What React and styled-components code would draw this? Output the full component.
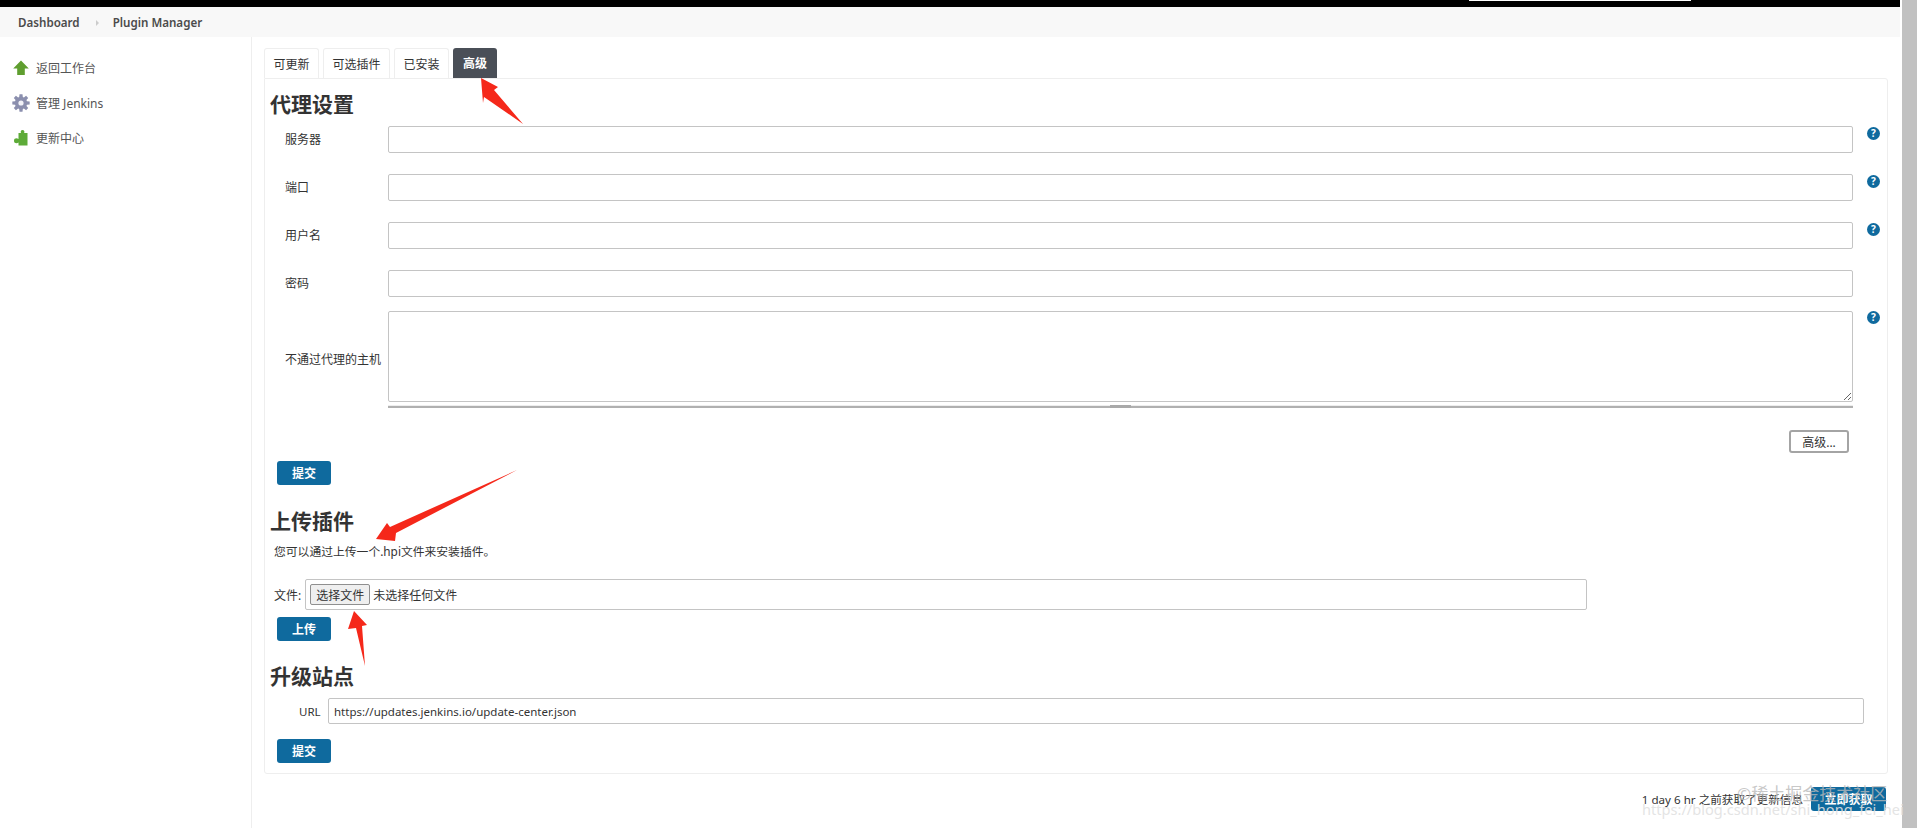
import React from 'react'
import styled, { createGlobalStyle } from 'styled-components'

const GlobalStyle = createGlobalStyle`
  html, body {
    margin: 0;
    height: 100%;
    overflow: hidden;
    background: #fff;
  }
  body {
    font-family: "Noto Sans", "Noto Sans CJK SC", sans-serif;
    font-size: 12px;
    color: #333;
  }
  * { box-sizing: border-box; }
`

const Shell = styled.div`
  position: relative;
  display: flex;
  height: 828px;
  overflow: hidden;
`

const Page = styled.div`
  width: 1900px;
  display: flex;
  flex-direction: column;
`

const Scrollbar = styled.div`
  width: 15px;
  margin-left: 2px;
  background: #c1c1c1;
`

const TopBar = styled.div`
  height: 7px;
  background: #000;
  display: flex;
  justify-content: flex-end;
  padding-right: 209px;
`

const SearchEdge = styled.div`
  width: 222px;
  height: 1px;
  background: #fff;
`

const Breadcrumb = styled.div`
  height: 30px;
  background: #f8f8f8;
  display: flex;
  align-items: center;
  padding-left: 18px;
  font-size: 11.6px;
  font-weight: 600;
  color: #4b4b4b;
`

const Crumb = styled.span`
  &:not(:first-child) {
    margin-left: 16px;
  }
  &:not(:first-child)::before {
    content: '';
    display: inline-block;
    margin-right: 14px;
    border-left: 3px solid #ccc;
    border-top: 3px solid transparent;
    border-bottom: 3px solid transparent;
    vertical-align: 1px;
  }
`

const Main = styled.div`
  flex: 1;
  display: flex;
`

const Side = styled.nav`
  width: 252px;
  border-right: 1px solid #eee;
  padding-top: 21px;
`

const SideItem = styled.div`
  display: flex;
  align-items: center;
  height: 20px;
  margin-bottom: 15px;
  padding-left: 12px;
  gap: 6px;
  color: #555;
`

const SideIcon = styled.svg`
  width: 18px;
  height: 18px;
  flex: none;
`

const Content = styled.div`
  width: 1624px;
  margin-left: 12px;
  padding-top: 11px;
`

const Tabs = styled.div`
  display: flex;
  gap: 4px;
  height: 30px;
`

const Tab = styled.div`
  display: flex;
  align-items: center;
  padding: 0 ${p => (p.$active ? '10px' : '8.5px')};
  border-radius: 3px 3px 0 0;
  border: ${p => (p.$active ? 'none' : '1px solid #eee')};
  border-bottom: none;
  background: ${p => (p.$active ? '#4a4f57' : '#fff')};
  color: ${p => (p.$active ? '#fff' : '#333')};
  font-weight: ${p => (p.$active ? 700 : 400)};
`

const Panel = styled.div`
  height: 696px;
  border: 1px solid #eee;
  border-radius: 0 3px 3px 3px;
`

const Heading = styled.h2`
  margin: ${p => p.$top}px 0 ${p => p.$bottom}px 5px;
  height: 24px;
  line-height: 24px;
  font-size: 21px;
  font-weight: 700;
  color: #333;
`

const Row = styled.div`
  display: flex;
  align-items: ${p => (p.$tall ? 'center' : 'flex-start')};
  position: relative;
  margin-bottom: ${p => p.$gap}px;
  padding-left: 20px;
`

const RowLabel = styled.label`
  width: 103px;
  flex: none;
  line-height: 27px;
  padding-top: ${p => (p.$tall ? 5 : 0)}px;
`

const TextInput = styled.input`
  width: 1465px;
  height: 27px;
  padding: 0 5px;
  border: 1px solid #c4c4c4;
  border-radius: 2px;
  background: #fff;
  font: inherit;
  color: #333;
`

const TextArea = styled.textarea`
  display: block;
  width: 1465px;
  height: 91px;
  border: 1px solid #c4c4c4;
  border-radius: 2px;
  background: #fff;
`

const HelpBadge = styled.span`
  position: absolute;
  left: 1602px;
  top: ${p => p.$top}px;
  width: 13px;
  height: 13px;
  border-radius: 50%;
  background: #0f6a9e;
  color: #fff;
  font-size: 10px;
  font-weight: 700;
  line-height: 13px;
  text-align: center;
`

const Grip = styled.div`
  position: relative;
  width: 1465px;
  height: 3px;
  margin: 3px 0 0 123px;
  background: #eee;
  border-bottom: 2px solid #b0b0b0;
  &::after {
    content: '';
    position: absolute;
    left: 722px;
    bottom: -2px;
    width: 21px;
    height: 3px;
    background: #a9a9a9;
  }
`

const AdvancedRow = styled.div`
  display: flex;
  justify-content: flex-end;
  padding-right: 38px;
  margin-top: 22px;
`

const AdvancedButton = styled.button`
  width: 60px;
  height: 23px;
  padding: 0;
  border: 2px solid #a4a4a4;
  border-radius: 3px;
  background: #fff;
  font: inherit;
  color: #333;
`

const PrimaryButton = styled.button`
  display: block;
  width: 54px;
  height: 24px;
  padding: 0;
  margin: ${p => p.$top}px 0 0 12px;
  border: none;
  border-radius: 3px;
  background: #0f6a9e;
  color: #fff;
  font: inherit;
  font-weight: 700;
`

const Description = styled.p`
  margin: 9px 0 0 9px;
  font-size: 11.8px;
  line-height: 18px;
  color: #333;
`

const FileRow = styled.div`
  display: flex;
  align-items: center;
  margin: 19px 0 0 9px;
  gap: 4px;
`

const FileBox = styled.div`
  width: 1282px;
  height: 31px;
  display: flex;
  align-items: center;
  padding-left: 4px;
  gap: 3px;
  border: 1px solid #c4c4c4;
  border-radius: 2px;
`

const FileButton = styled.button`
  width: 60px;
  height: 21px;
  padding: 0;
  border: 1px solid #8f8f8f;
  border-radius: 2px;
  background: #efefef;
  font: inherit;
  color: #333;
`

const UrlRow = styled.div`
  display: flex;
  align-items: center;
  padding-left: 34px;
`

const UrlLabel = styled.label`
  width: 29px;
  flex: none;
  font-size: 11.5px;
`

const UrlInput = styled(TextInput)`
  width: 1536px;
  height: 26px;
  font-size: 11.5px;
`

const Footer = styled.div`
  display: flex;
  justify-content: flex-end;
  align-items: center;
  gap: 8px;
  margin-top: 13px;
  padding-right: 2px;
`

const FooterNote = styled.span`
  font-size: 11.6px;
`

const FooterButton = styled(PrimaryButton)`
  width: 75px;
  margin: 0;
`

const ArrowLayer = styled.svg`
  position: absolute;
  left: 0;
  top: 0;
  width: 1917px;
  height: 828px;
  pointer-events: none;
`

const Watermark = styled.div`
  position: absolute;
  left: ${p => p.$left}px;
  top: ${p => p.$top}px;
  font-size: ${p => p.$size}px;
  line-height: 20px;
  color: ${p => p.$color};
  white-space: nowrap;
`

// gear outline generated once so the teeth stay even
const gearPath = (() => {
  const pts = []
  for (let i = 0; i < 8; i++) {
    const a = (i / 8) * Math.PI * 2
    ;[[-0.3, 6.2], [-0.17, 8.8], [0.17, 8.8], [0.3, 6.2]].forEach(([o, r]) => {
      pts.push(`${(9 + r * Math.cos(a + o)).toFixed(2)},${(9 + r * Math.sin(a + o)).toFixed(2)}`)
    })
  }
  return pts.join(' ')
})()

const menu = [
  {
    label: '返回工作台',
    icon: <path d="M9 1.5 16.8 9.500H12.800V16H5.200V9.500H1.200Z" fill="#5f9e2f" />,
  },
  {
    label: '管理 Jenkins',
    icon: (
      <g>
        <polygon points={gearPath} fill="#8b8fae" />
        <circle cx="9" cy="9" r="2.6" fill="#f2f2f8" />
      </g>
    ),
  },
  {
    label: '更新中心',
    icon: (
      <path
        d="M10.500 1c1.700 0 2.400 1.500 1.600 3h3.400v12.500H6.500v-3c-1.600 1.200-4.500 1-4.500-1.800s2.900-3 4.500-1.800V4H9C8.300 2.500 8.900 1 10.500 1Z"
        fill="#5dab38"
      />
    ),
  },
]

const tabs = ['可更新', '可选插件', '已安装', '高级']

const fields = [
  { label: '服务器', help: true },
  { label: '端口', help: true },
  { label: '用户名', help: true },
  { label: '密码', help: false },
]

export default function App() {
  return (
    <>
      <GlobalStyle />
      <Shell>
        <Page>
          <TopBar>
            <SearchEdge />
          </TopBar>
          <Breadcrumb>
            <Crumb>Dashboard</Crumb>
            <Crumb>Plugin Manager</Crumb>
          </Breadcrumb>
          <Main>
            <Side>
              {menu.map(item => (
                <SideItem key={item.label}>
                  <SideIcon viewBox="0 0 18 18">{item.icon}</SideIcon>
                  {item.label}
                </SideItem>
              ))}
            </Side>
            <Content>
              <Tabs>
                {tabs.map(t => (
                  <Tab key={t} $active={t === '高级'}>{t}</Tab>
                ))}
              </Tabs>
              <Panel>
                <Heading $top={13} $bottom={10}>代理设置</Heading>
                {fields.map((f, i) => (
                  <Row key={f.label} $gap={i === 3 ? 14 : 21}>
                    <RowLabel>{f.label}</RowLabel>
                    <TextInput />
                    {f.help && <HelpBadge $top={1}>?</HelpBadge>}
                  </Row>
                ))}
                <Row $tall $gap={0}>
                  <RowLabel $tall>不通过代理的主机</RowLabel>
                  <TextArea />
                  <HelpBadge $top={0}>?</HelpBadge>
                </Row>
                <Grip />
                <AdvancedRow>
                  <AdvancedButton>高级...</AdvancedButton>
                </AdvancedRow>
                <PrimaryButton $top={8}>提交</PrimaryButton>

                <Heading $top={24} $bottom={0}>上传插件</Heading>
                <Description>您可以通过上传一个.hpi文件来安装插件。</Description>
                <FileRow>
                  <span>文件:</span>
                  <FileBox>
                    <FileButton>选择文件</FileButton>
                    <span>未选择任何文件</span>
                  </FileBox>
                </FileRow>
                <PrimaryButton $top={7}>上传</PrimaryButton>

                <Heading $top={23} $bottom={10}>升级站点</Heading>
                <UrlRow>
                  <UrlLabel>URL</UrlLabel>
                  <UrlInput defaultValue="https://updates.jenkins.io/update-center.json" />
                </UrlRow>
                <PrimaryButton $top={15}>提交</PrimaryButton>
              </Panel>
              <Footer>
                <FooterNote>1 day 6 hr 之前获取了更新信息</FooterNote>
                <FooterButton>立即获取</FooterButton>
              </Footer>
            </Content>
          </Main>
        </Page>
        <Scrollbar />

        <ArrowLayer viewBox="0 0 1917 828">
          <g fill="#f5281a">
            <polygon points="481,78 498,87 494,90 523,124 484,97 483,103" />
            <polygon points="376,539 387,523 390,527 517,470 396,533 395,541" />
            <polygon points="354,611 367,625 362,626 365,666 356,628 348,629" />
          </g>
        </ArrowLayer>
        <Watermark $left={1737} $top={784} $size={17} $color="rgba(185, 185, 185, 0.8)">©稀土掘金技术社区</Watermark>
        <Watermark $left={1642} $top={799} $size={14.6} $color="rgba(225, 225, 225, 0.9)">https://blog.csdn.net/shi_hong_fei_hei</Watermark>
      </Shell>
    </>
  )
}
